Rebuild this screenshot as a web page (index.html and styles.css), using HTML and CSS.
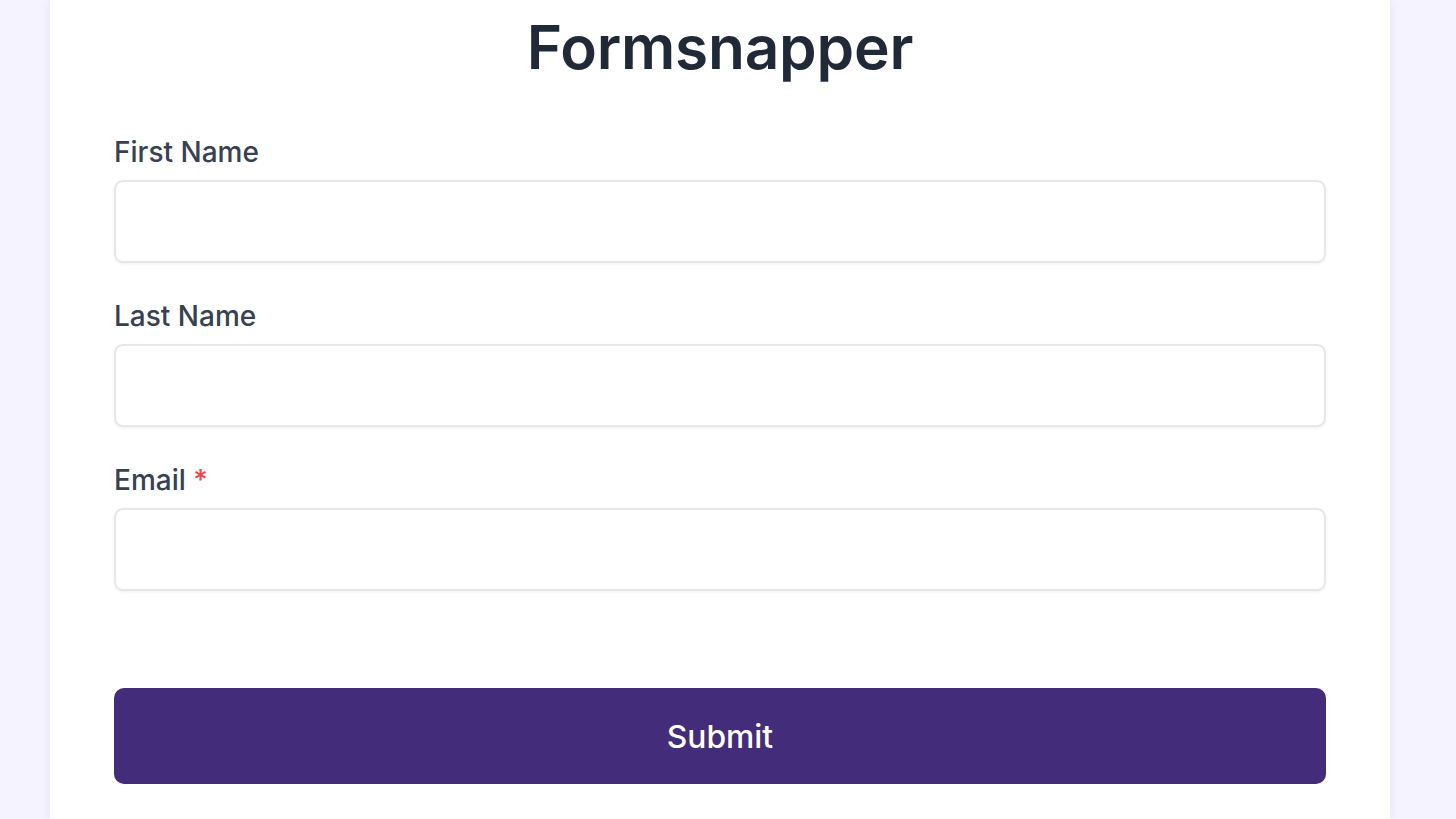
FILE: index.html
```html
<!DOCTYPE html>
<html lang="en">
<head>
<meta charset="utf-8">
<title>Formsnapper</title>
<link rel="stylesheet" href="styles.css">
</head>
<body>
<main class="card">
  <h1 class="title">Formsnapper</h1>
  <form class="form">
    <div class="field">
      <label class="label" for="first">First Name</label>
      <input class="input" id="first" type="text">
    </div>
    <div class="field">
      <label class="label" for="last">Last Name</label>
      <input class="input" id="last" type="text">
    </div>
    <div class="field">
      <label class="label" for="email">Email <span class="req">*</span></label>
      <input class="input" id="email" type="email">
    </div>
    <button class="submit" type="button">Submit</button>
  </form>
</main>
</body>
</html>
```
FILE: styles.css
```css
html, body {
  margin: 0;
  padding: 0;
}
body {
  background: #f5f3ff;
  font-family: Inter, "Noto Sans", sans-serif;
  height: 819px;
  overflow: hidden;
}
.card {
  box-sizing: border-box;
  width: 1340px;
  margin-left: 50px;
  min-height: 819px;
  background: #ffffff;
  padding: 18px 64px 0 64px;
  box-shadow: 0 0 10px rgba(60, 40, 120, 0.08);
}
.title {
  margin: 0 0 55px 0;
  font-size: 60.3px;
  line-height: 60px;
  font-weight: 600;
  color: #1f2937;
  text-align: center;
  letter-spacing: -0.2px;
}
.form {
  display: flex;
  flex-direction: column;
  gap: 34px;
}
.field {
  display: flex;
  flex-direction: column;
}
.label {
  font-size: 28px;
  line-height: 38px;
  height: 38px;
  font-weight: 500;
  color: #374151;
  margin-bottom: 9px;
}
.req {
  color: #ef4444;
}
.input {
  box-sizing: border-box;
  height: 83px;
  width: 100%;
  border: 2px solid #e5e7eb;
  border-radius: 9px;
  background: #fff;
  box-shadow: 0 1px 3px rgba(0, 0, 0, 0.07);
  font-family: inherit;
  font-size: 26px;
  padding: 0 16px;
  outline: none;
}
.submit {
  margin-top: 63px;
  height: 96px;
  width: 100%;
  border: none;
  border-radius: 10px;
  background: #432c7a;
  color: #ffffff;
  font-family: inherit;
  font-size: 31.8px;
  font-weight: 500;
  cursor: pointer;
}
```
